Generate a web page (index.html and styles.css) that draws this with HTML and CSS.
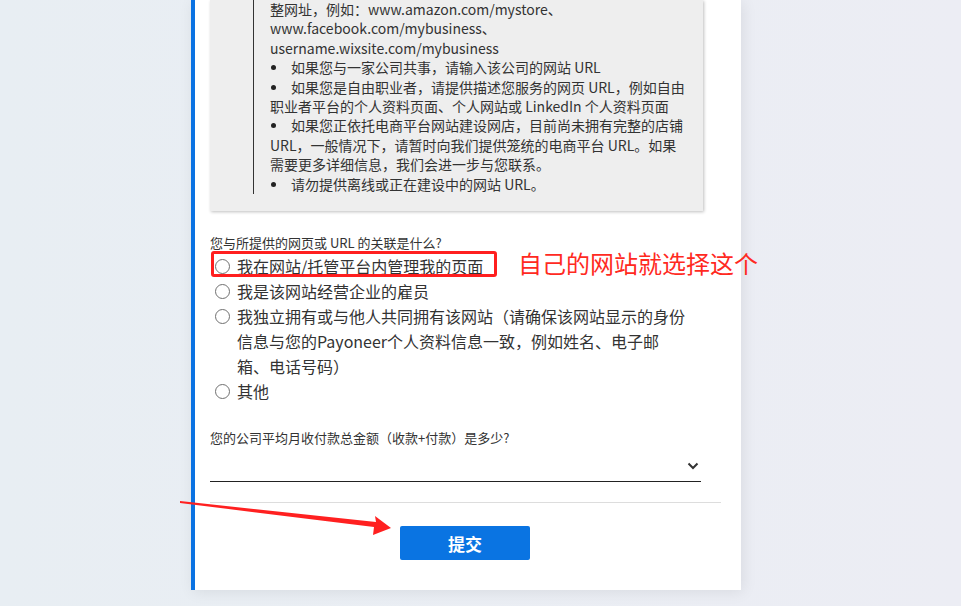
FILE: index.html
```html
<!DOCTYPE html>
<html lang="zh-CN">
<head>
    <meta charset="UTF-8">
    <meta name="viewport" content="width=device-width, initial-scale=1.0">
    <title>网站信息</title>
    <link rel="stylesheet" href="styles.css">
</head>
<body>

    <div class="card">
        <!-- 网址说明 -->
        <div class="tip-box">
            <div class="tip-text">
                整网址，例如：www.amazon.com/mystore、www.facebook.com/mybusiness、username.wixsite.com/mybusiness<br>
                <span class="dot"></span>如果您与一家公司共事，请输入该公司的网站 URL<br>
                <span class="dot"></span>如果您是自由职业者，请提供描述您服务的网页 URL，例如自由职业者平台的个人资料页面、个人网站或 LinkedIn 个人资料页面<br>
                <span class="dot"></span>如果您正依托电商平台网站建设网店，目前尚未拥有完整的店铺 URL，一般情况下，请暂时向我们提供笼统的电商平台 URL。如果需要更多详细信息，我们会进一步与您联系。<br>
                <span class="dot"></span>请勿提供离线或正在建设中的网站 URL。
            </div>
        </div>

        <!-- 关联 -->
        <p class="question">您与所提供的网页或 URL 的关联是什么?</p>
        <div class="options">
            <label class="option"><input type="radio" name="relation"><span>我在网站/托管平台内管理我的页面</span></label>
            <label class="option"><input type="radio" name="relation"><span>我是该网站经营企业的雇员</span></label>
            <label class="option"><input type="radio" name="relation"><span>我独立拥有或与他人共同拥有该网站（请确保该网站显示的身份信息与您的Payoneer个人资料信息一致，例如姓名、电子邮箱、电话号码）</span></label>
            <label class="option"><input type="radio" name="relation"><span>其他</span></label>
        </div>

        <!-- 月收付款 -->
        <p class="question amount-q">您的公司平均月收付款总金额（收款+付款）是多少?</p>
        <div class="select-box">
            <svg class="chevron" width="12" height="8" viewBox="0 0 12 8"><polyline points="1.5,1.5 6,6 10.5,1.5" fill="none" stroke="#333" stroke-width="2"/></svg>
        </div>

        <hr class="divider">

        <div class="btn-row">
            <button class="submit-btn">提交</button>
        </div>
    </div>

    <!-- 标注 -->
    <div class="mark-box"></div>
    <div class="mark-text">自己的网站就选择这个</div>
    <svg class="mark-arrow" width="961" height="606" viewBox="0 0 961 606">
        <polygon points="180,501 376,522 375,516 391,528 373,535 374,527 180,503" fill="#ff2020"/>
    </svg>

</body>
</html>
```

FILE: styles.css
```css
body {
    margin: 0;
    font-family: "Noto Sans CJK SC", "Noto Sans", sans-serif;
    color: #333;
    background: linear-gradient(90deg, #e8eef3, #ecedf4);
    height: 606px;
    overflow: hidden;
}
.card {
    margin-left: 191px;
    width: 511px;
    background: white;
    border-left: 4px solid #0a72e2;
    padding: 0 20px 30px 15px;
    box-shadow: 2px 2px 14px rgba(0, 0, 0, 0.08);
}
.tip-box {
    width: 493px;
    background: #eeeeee;
    box-shadow: 1px 1px 3px rgba(0, 0, 0, 0.25);
    padding: 0 17px 17px 43px;
    box-sizing: border-box;
}
.tip-text {
    border-left: 1px solid #333;
    padding-left: 16px;
    font-size: 14px;
    line-height: 19.4px;
}
.dot {
    display: inline-block;
    width: 21px;
    height: 19px;
    vertical-align: top;
    position: relative;
}
.dot::before {
    content: "";
    position: absolute;
    left: 1px;
    top: 7px;
    width: 5px;
    height: 5px;
    border-radius: 50%;
    background: #222;
}
.question {
    margin: 23px 0 2px;
    font-size: 13px;
    line-height: 18px;
}
.options {
    font-size: 16px;
    line-height: 25px;
}
.option {
    display: flex;
    align-items: flex-start;
    gap: 7px;
    padding-left: 5px;
}
.option span {
    max-width: 448px;
}
.option input {
    appearance: none;
    margin: 5px 0 0;
    width: 15px;
    height: 15px;
    border: 1.5px solid #707070;
    border-radius: 50%;
    flex-shrink: 0;
    box-sizing: border-box;
}
.amount-q {
    margin-top: 25px;
}
.select-box {
    width: 491px;
    height: 33px;
    border-bottom: 1.5px solid #222;
    display: flex;
    justify-content: flex-end;
    align-items: center;
    box-sizing: border-box;
    padding: 0 2px 0 0;
}
.chevron {
    margin-top: 2px;
}
.divider {
    margin: 20px 0 0;
    border: none;
    border-top: 1px solid #ddd;
}
.btn-row {
    display: flex;
    justify-content: center;
    margin-top: 23px;
}
.submit-btn {
    width: 130px;
    height: 34px;
    background-color: #0a74e2;
    color: white;
    border: none;
    border-radius: 2px;
    font-family: inherit;
    font-size: 17px;
    font-weight: bold;
    margin-left: -1px;
}
.mark-box {
    position: absolute;
    left: 211px;
    top: 251px;
    width: 280px;
    height: 20px;
    border: 3px solid #ff1f1f;
    border-radius: 3px;
}
.mark-text {
    position: absolute;
    left: 518px;
    top: 246px;
    font-size: 24px;
    line-height: 34px;
    color: #ff2a1f;
}
.mark-arrow {
    position: absolute;
    left: 0;
    top: 0;
}
```
